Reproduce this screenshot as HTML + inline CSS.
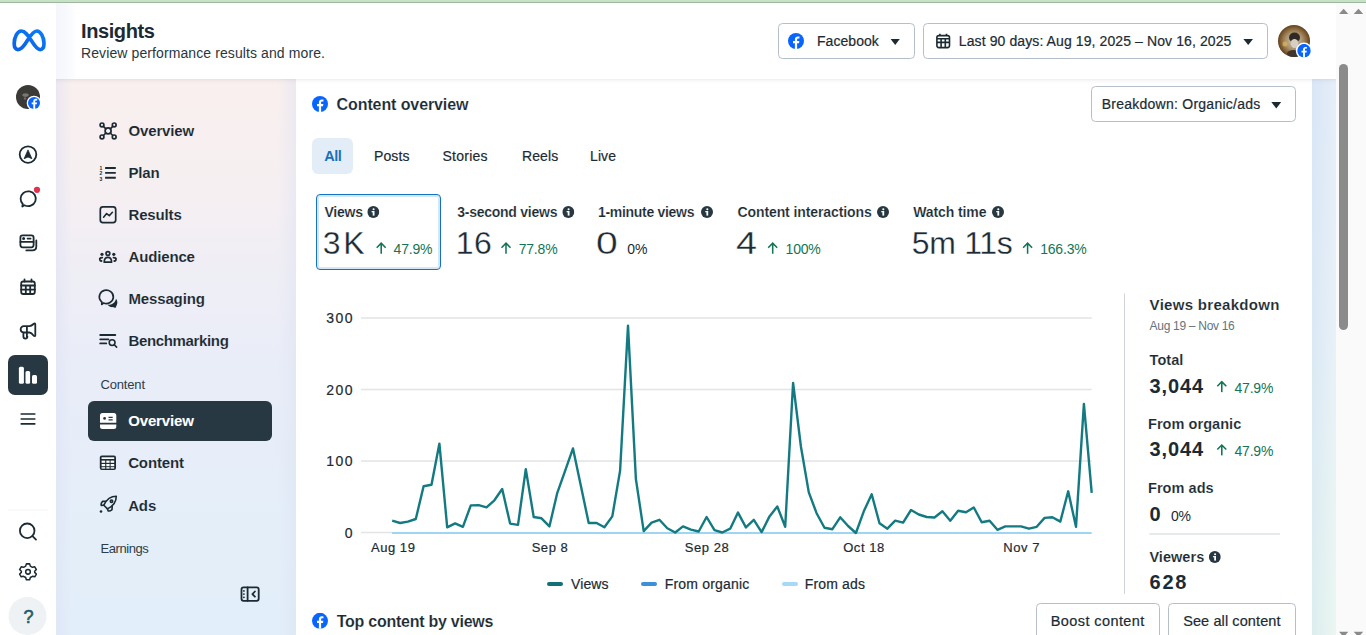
<!DOCTYPE html>
<html><head><meta charset="utf-8">
<style>
*{box-sizing:border-box;margin:0;padding:0}
html,body{width:1366px;height:635px;overflow:hidden;background:#fff;font-family:"Liberation Sans",sans-serif;color:#1c2b33}
.a{position:absolute}
.t{position:absolute;white-space:nowrap;line-height:1}
.rg{-webkit-text-stroke:0.2px #1c2b33}
.b{font-weight:700}
.sb{-webkit-text-stroke:0.12px #fff}
svg{position:absolute;overflow:visible}
#topbar{left:0;top:0;width:1366px;height:3px;background:#c6e1c6;border-bottom:1px solid #9fb79f}
#rail{left:0;top:3px;width:56px;height:632px;background:#fff}
#header{left:56px;top:3px;width:1280px;height:76px;background:linear-gradient(90deg,#f4f6fc 0px,#f8f9fd 10px,#fff 22px)}
#hshadow{left:56px;top:79px;width:1280px;height:5px;background:linear-gradient(rgba(0,0,20,0.065),rgba(0,0,20,0.025) 40%,rgba(0,0,20,0))}
#side{left:56px;top:79px;width:240px;height:556px;background:linear-gradient(90deg,rgba(222,224,244,0.5) 0px,rgba(222,224,244,0) 16px,rgba(222,224,244,0) 222px,rgba(218,224,242,0.4) 240px),linear-gradient(180deg,#f9efee 0%,#f6eff1 18%,#efeef5 35%,#e9edf8 52%,#e5eef9 75%,#e2eef9 100%)}
#main{left:296px;top:79px;width:1016px;height:556px;background:#fff}
#strip{left:1312px;top:79px;width:24px;height:556px;background:linear-gradient(90deg,rgba(210,225,245,0.35),rgba(255,255,255,0.25)),linear-gradient(180deg,#dde8f7 0%,#e0ecf5 45%,#e2f1f0 75%,#e3f4ec 100%)}
#sb{left:1336px;top:3px;width:30px;height:632px;background:#fafafa}
.btn{position:absolute;border:1px solid #b5bfc9;border-radius:4.5px;background:#fff}
.nav{font-size:15px;font-weight:700;letter-spacing:-0.15px;-webkit-text-stroke:0.12px rgba(240,238,246,0.9)}
.lbl{font-size:13px;color:#2f3d47}
.tab{font-size:14px}
.cl{font-size:14px;font-weight:700;letter-spacing:-0.2px;-webkit-text-stroke:0.15px #fff}
.val{font-size:32px;letter-spacing:0.3px;-webkit-text-stroke:0.3px #fff}
.pct{font-size:14px;color:#137555;letter-spacing:-0.2px}
.yl{font-size:14px;letter-spacing:1.5px;text-align:right;width:41.5px}
.xl{font-size:13px;letter-spacing:0.55px;width:80px;text-align:center}
.lg{font-size:14px;letter-spacing:0.1px}
.sw{position:absolute;height:4px;width:16px;border-radius:2px;top:582px}
.info{position:absolute;width:12px;height:12px;border-radius:6px;background:#283a45;color:#fff;font-size:9px;font-weight:700;text-align:center;line-height:12px}
</style></head><body>
<div id="topbar" class="a"></div>
<div id="rail" class="a"></div>
<div id="header" class="a"></div>
<div id="side" class="a"></div>
<div id="main" class="a"></div>
<div id="strip" class="a"></div>
<div id="hshadow" class="a"></div>
<div id="sb" class="a"></div>

<!-- HEADER -->
<div class="t b" style="left:81px;top:21px;font-size:20px;letter-spacing:-0.4px">Insights</div>
<div class="t" style="left:81px;top:46px;font-size:14px;letter-spacing:0.1px;color:#283842">Review performance results and more.</div>

<!-- RAIL -->
<svg style="left:0;top:0" width="56" height="635" viewBox="0 0 56 635">
 <defs><linearGradient id="mg" x1="0" y1="1" x2="1" y2="0"><stop offset="0" stop-color="#0a62e6"/><stop offset="1" stop-color="#0a7cf7"/></linearGradient></defs><path d="M21.3 31 C25 31 27.8 35 31.3 40.5 C35 46.5 37.5 49.6 40.2 49.6 C42.6 49.6 44 47.3 44 43.6 C44 37 40.6 31 36.8 31 C33.6 31 30.8 35 27.4 40.5 C23.9 46.3 21.3 49.6 18 49.6 C15.6 49.6 14.2 47.4 14.2 43.6 C14.2 37 17.4 31 21.3 31 Z" fill="none" stroke="url(#mg)" stroke-width="3.7" stroke-linejoin="round"/>
 <circle cx="28" cy="97" r="12" fill="#3b3a36"/>
 <ellipse cx="25.5" cy="95" rx="3.2" ry="1.8" fill="#8f8c82" opacity="0.75"/><circle cx="25" cy="98.5" r="1.2" fill="#8f8c82" opacity="0.6"/>
 <circle cx="34" cy="103" r="7.3" fill="#fff"/>
 <circle cx="34" cy="103" r="6" fill="#0866ff"/>
 <path d="M35.2 109 V104.3 H36.8 L37.1 102.5 H35.2 V101.4 C35.2 100.8 35.5 100.4 36.3 100.4 H37.2 V98.8 C36.8 98.7 36.3 98.7 35.8 98.7 C34.3 98.7 33.3 99.6 33.3 101.2 V102.5 H31.7 V104.3 H33.3 V109 Z" fill="#fff"/>
 <g fill="none" stroke="#1c2b33" stroke-width="1.8" stroke-linecap="round" stroke-linejoin="round">
  <circle cx="28" cy="154.6" r="8.3"/>
  <path d="M20.6 198.6 A7.6 7.4 0 1 1 24.5 205.2 L22.3 206.5 L22.8 204 A7.6 7.4 0 0 1 20.6 198.6 Z"/>
  <rect x="20.4" y="235.3" width="13.2" height="12" rx="2.2"/>
  <path d="M20.4 241.9 H33.6 M27.6 238.6 H30.6"/>
  <path d="M36.3 240.5 V246.5 Q36.3 250.4 32.4 250.4 H26.3"/>
  <rect x="21.2" y="281.5" width="13.6" height="12.5" rx="2"/>
  <path d="M24.5 279.5 V281.5 M31.5 279.5 V281.5 M21.2 285.5 H34.8 M21.2 289.7 H34.8 M25.8 285.5 V294 M30.2 285.5 V294"/>
  <path d="M26.9 326.2 H23.8 A3.15 3.15 0 0 0 23.8 332.5 H26.9 Z M26.9 326.2 H29.5 Q31.5 326 33.5 324 Q35.3 322.6 35.3 324.5 V335.2 Q35.3 337 33.5 335.6 Q31.5 332.7 29.5 332.5 H26.9 M26.9 326.2 V336.8 M23.4 332.5 V336.6 A2 2 0 0 0 27.4 336.6"/>
  <circle cx="27.2" cy="530.8" r="7.3"/>
  <path d="M32.5 536.1 L36 539.6"/>
 </g>
 
 <path d="M28 149.9 L24.1 158.7 L28 157 L31.9 158.7 Z" fill="#1c2b33" stroke="#1c2b33" stroke-width="0.8" stroke-linejoin="round"/>
 <circle cx="23.6" cy="238.6" r="1.5" fill="#1c2b33"/>
 <circle cx="37" cy="189.8" r="3.1" fill="#e0324b"/>
 <rect x="8" y="355" width="40" height="40" rx="7" fill="#283842"/>
 <rect x="18.9" y="366.7" width="5" height="17" rx="1.5" fill="#fff"/>
 <rect x="25.5" y="371" width="4.6" height="12.7" rx="1.5" fill="#fff"/>
 <rect x="32" y="375" width="5" height="8.7" rx="1.5" fill="#fff"/>
 <path d="M20.6 414 H35.4 M20.6 419 H35.4 M20.6 423.8 H35.4" stroke="#1c2b33" stroke-width="1.7"/>
 <path d="M8 510 H48" stroke="#f4f4f4" stroke-width="1.2"/>
 <g transform="translate(28 571.8) scale(0.9)" fill="none" stroke="#1c2b33" stroke-width="1.7" stroke-linejoin="round">
  <path d="M-1.8 -8.8 H1.8 L2.6 -6.3 L4.9 -5 L7.5 -5.6 L9.3 -2.5 L7.4 -0.6 V0.6 L9.3 2.5 L7.5 5.6 L4.9 5 L2.6 6.3 L1.8 8.8 H-1.8 L-2.6 6.3 L-4.9 5 L-7.5 5.6 L-9.3 2.5 L-7.4 0.6 V-0.6 L-9.3 -2.5 L-7.5 -5.6 L-4.9 -5 L-2.6 -6.3 Z"/>
  <circle cx="0" cy="0" r="2.6"/>
 </g>
 <circle cx="27.5" cy="616" r="19" fill="#eef2f5"/>
</svg>
<div class="t" style="left:21.5px;top:607.5px;font-size:18px;color:#1b5f6e;width:14px;text-align:center;-webkit-text-stroke:0.6px #1b5f6e">?</div>
<!-- SIDEBAR -->
<div class="a" style="left:88px;top:401px;width:184px;height:40px;border-radius:6px;background:#283842"></div>
<svg style="left:0;top:0" width="300" height="635" viewBox="0 0 300 635">
 <g fill="none" stroke="#1c2b33" stroke-width="1.7" stroke-linecap="round" stroke-linejoin="round">
  <circle cx="102" cy="124.9" r="1.9"/><circle cx="114.2" cy="124.9" r="1.9"/><circle cx="102" cy="136.9" r="1.9"/><circle cx="114.2" cy="136.9" r="1.9"/>
  <circle cx="108.1" cy="130.9" r="3"/>
  <path d="M103.4 126.3 L105.9 128.8 M112.8 126.3 L110.3 128.8 M103.4 135.5 L105.9 133 M112.8 135.5 L110.3 133"/>
  <path d="M105.1 168 H115.8 M105.1 172.9 H115.8 M105.1 177.7 H115.8" stroke-width="1.9" stroke-linecap="butt"/>
  <rect x="100.3" y="206.9" width="15.4" height="15.7" rx="2.6"/>
  <path d="M103.6 217.2 L106.6 213.6 L109.3 215.7 L112.4 212.3" stroke-width="1.6"/>
  <circle cx="107.9" cy="253.5" r="1.9"/>
  <path d="M104.2 262.2 Q104.2 257.4 107.9 257.4 Q111.6 257.4 111.6 262.2 Z"/>
  <path d="M101.5 261 Q99.6 261 99.8 258.6 Q100.5 257.6 102.3 257.6 M114.3 261 Q116.2 261 116 258.6 Q115.3 257.6 113.5 257.6" stroke-width="1.8"/>
  <path d="M100.7 300.8 A7 6.7 0 1 1 103.6 303 L101.8 304.4 L101.8 301.9 A7 6.7 0 0 1 100.7 300.8 Z"/>
  <path d="M100.2 335 H115.3 M100.2 339.3 H108.5 M100.2 343.4 H106.3" stroke-width="1.8"/>
  <circle cx="112.1" cy="342.6" r="2.9" stroke-width="1.6"/>
  <path d="M114.3 344.8 L116.6 347.1" stroke-width="1.6"/>
  <rect x="241.5" y="587.4" width="17.2" height="13.4" rx="2" stroke-width="1.8"/>
  <path d="M247.6 587.4 V600.8 M254.9 591.5 L252.4 594.1 L254.9 596.7" stroke-width="1.8"/>
 </g>
 <g fill="#1c2b33">
  <text x="99.4" y="169.9" font-size="5" font-family="Liberation Sans" font-weight="700">1</text>
  <text x="99.4" y="175.2" font-size="5" font-family="Liberation Sans" font-weight="700">2</text>
  <text x="99.4" y="180.5" font-size="5" font-family="Liberation Sans" font-weight="700">3</text>
  <circle cx="102" cy="254.3" r="1.6"/><circle cx="113.8" cy="254.3" r="1.6"/>
  <path d="M107.6 304.8 C111.8 305 115 303 116 298.8 C117.6 300.6 117.8 303.5 116.6 305.6 L115.4 307.9 L112.9 307.1 C110.9 307.4 109 306.6 107.6 304.8 Z"/>
  <circle cx="243.9" cy="590.9" r="0.9"/><circle cx="243.9" cy="594.1" r="0.9"/><circle cx="243.9" cy="597.3" r="0.9"/>
  <path d="M99.8 457.4 Q99.8 455.4 101.8 455.4 H114 Q116 455.4 116 457.4 V468.1 Q116 470.1 114 470.1 H101.8 Q99.8 470.1 99.8 468.1 Z"/>
 </g>
 <g fill="#fff">
  <rect x="101.6" y="457.3" width="12.6" height="1.7"/>
  <rect x="101.6" y="460.6" width="3.6" height="2.2"/><rect x="106.3" y="460.6" width="3.3" height="2.2"/><rect x="110.6" y="460.6" width="3.6" height="2.2"/>
  <rect x="101.6" y="464" width="3.6" height="2.2"/><rect x="106.3" y="464" width="3.3" height="2.2"/><rect x="110.6" y="464" width="3.6" height="2.2"/>
  <rect x="101.6" y="467.2" width="3.6" height="1.4"/><rect x="106.3" y="467.2" width="3.3" height="1.4"/><rect x="110.6" y="467.2" width="3.6" height="1.4"/>
  <path d="M100 415.6 Q100 413.1 102.5 413.1 H113.8 Q116.3 413.1 116.3 415.6 V422.8 H100 Z M100 424.5 H116.3 V426.4 Q116.3 428.9 113.8 428.9 H102.5 Q100 428.9 100 426.4 Z"/>
 </g>
 <circle cx="104.6" cy="418.4" r="1.4" fill="#283842"/>
 <path d="M108.5 417.4 H112.7 M108.5 419.8 H112.7" stroke="#283842" stroke-width="1.2"/>
 <g fill="none" stroke="#1c2b33" stroke-width="1.6" stroke-linecap="round" stroke-linejoin="round">
  <path d="M116.3 496.3 C111.5 496.3 106.5 499.5 103.8 505.2 L107.5 508.9 C113.2 506.2 116.3 501.2 116.3 496.3 Z"/>
  <path d="M105.8 501.2 L102.6 501.4 Q100.6 503.4 101.3 505.4 L103.8 505.2 M112.2 506.4 L112 509.6 Q110 511.4 108.2 510.9 L107.5 508.9"/>
  <circle cx="111.5" cy="501.2" r="1.2"/>
 </g>
 <circle cx="101" cy="511.5" r="1.3" fill="#1c2b33"/>
</svg>
<div class="t nav" style="left:128.5px;top:123.4px">Overview</div>
<div class="t nav" style="left:128.5px;top:165.4px">Plan</div>
<div class="t nav" style="left:128.5px;top:207.3px">Results</div>
<div class="t nav" style="left:128.5px;top:249.3px">Audience</div>
<div class="t nav" style="left:128.5px;top:291.3px">Messaging</div>
<div class="t nav" style="left:128.5px;top:332.8px;letter-spacing:-0.35px">Benchmarking</div>
<div class="t lbl" style="left:100.4px;top:378px;letter-spacing:-0.15px">Content</div>
<div class="t nav" style="left:128.2px;top:413.4px;color:#fff">Overview</div>
<div class="t nav" style="left:128.2px;top:455.1px">Content</div>
<div class="t nav" style="left:128.2px;top:497.5px">Ads</div>
<div class="t lbl" style="left:100.6px;top:542px;letter-spacing:-0.45px">Earnings</div>

<!-- HEADER CONTROLS -->
<div class="btn" style="left:778px;top:23px;width:137px;height:36px"></div>
<div class="btn" style="left:923px;top:23px;width:345px;height:36px"></div>
<div class="t rg" style="left:817px;top:34.2px;font-size:14px;letter-spacing:0.05px">Facebook</div>
<div class="t rg" style="left:958.8px;top:34.2px;font-size:14px;letter-spacing:0.1px">Last 90 days: Aug 19, 2025 – Nov 16, 2025</div>
<svg style="left:0;top:0" width="1366" height="80" viewBox="0 0 1366 80">
 <defs>
  <symbol id="fb" viewBox="0 0 16 16"><circle cx="8" cy="8" r="8" fill="#0866ff"/><path d="M9.1 16 V10.2 H11 L11.35 8 H9.1 V6.7 C9.1 6 9.45 5.5 10.4 5.5 H11.45 V3.6 C11 3.55 10.4 3.5 9.85 3.5 C8.05 3.5 6.9 4.6 6.9 6.5 V8 H5 V10.2 H6.9 V16 Z" fill="#fff"/></symbol>
 </defs>
 <use href="#fb" x="788" y="33" width="16" height="16"/>
 <path d="M890.6 39 H899.8 L895.2 44.9 Z" fill="#1c2b33"/>
 <path d="M1243.4 39 H1253 L1248.2 44.9 Z" fill="#1c2b33"/>
 <g fill="none" stroke="#1c2b33" stroke-width="1.6">
  <rect x="936.9" y="35.6" width="12.6" height="12" rx="2"/>
  <path d="M939.9 33.8 V35.6 M946.5 33.8 V35.6 M936.9 38.8 H949.5 M936.9 42.4 H949.5 M941.1 38.8 V47.6 M945.3 38.8 V47.6"/>
 </g>
 <defs><radialGradient id="av" cx="50%" cy="50%" r="50%"><stop offset="0" stop-color="#cfc8b8"/><stop offset="0.55" stop-color="#a88f68"/><stop offset="0.85" stop-color="#7f5c30"/><stop offset="1" stop-color="#5e4222"/></radialGradient></defs>
 <circle cx="1294" cy="41" r="16" fill="url(#av)"/>
 <ellipse cx="1294.5" cy="37.5" rx="5.5" ry="5" fill="#2f2a25"/>
 <ellipse cx="1294.5" cy="43.5" rx="3.8" ry="4.5" fill="#d6cfc2"/>
 <ellipse cx="1294" cy="53.5" rx="7" ry="3.5" fill="#3e352d"/>
 <circle cx="1285" cy="44" r="2.5" fill="#d7b060" opacity="0.8"/>
 <circle cx="1304" cy="50.7" r="8.2" fill="#fff"/>
 <use href="#fb" x="1297.2" y="43.9" width="13.6" height="13.6"/>
 <path d="M1339 13.9 L1343.65 8.8 L1348.3 13.9 Z M1353.7 13.9 L1358.45 8.8 L1363.2 13.9 Z" fill="#8a8a8a"/>
</svg>
<div class="a" style="left:1339px;top:64px;width:9px;height:266px;border-radius:4.5px;background:#8b8b8b"></div>
<svg style="left:1336px;top:625px" width="30" height="10"><path d="M3 6.8 L12.3 6.8 L7.65 12 Z M17.7 6.8 L27.2 6.8 L22.45 12 Z" fill="#8a8a8a"/></svg>

<!-- CONTENT OVERVIEW -->
<svg style="left:312px;top:96px" width="16" height="16" viewBox="0 0 16 16"><use href="#fb"/></svg>
<div class="t b sb" style="left:336.6px;top:96.5px;font-size:16px;letter-spacing:-0.1px">Content overview</div>
<div class="btn" style="left:1091px;top:86px;width:205px;height:36px"></div>
<div class="t rg" style="left:1101.7px;top:97.2px;font-size:14px;letter-spacing:0.25px">Breakdown: Organic/ads</div>
<svg style="left:1271px;top:101px" width="12" height="8"><path d="M0.3 1 H10.2 L5.25 7.5 Z" fill="#1c2b33"/></svg>

<div class="a" style="left:312px;top:138px;width:41px;height:35.5px;border-radius:6px;background:#e3edf7"></div>
<div class="t b tab" style="left:324.3px;top:149.2px;color:#1a70bd;font-size:14.5px;letter-spacing:-0.5px">All</div>
<div class="t tab rg" style="left:374px;top:149.2px;letter-spacing:0.1px">Posts</div>
<div class="t tab rg" style="left:442.5px;top:149.2px;letter-spacing:0.25px">Stories</div>
<div class="t tab rg" style="left:522px;top:149.2px;letter-spacing:0.1px">Reels</div>
<div class="t tab rg" style="left:590px;top:149.2px;letter-spacing:0.1px">Live</div>

<!-- METRIC CARDS -->
<div class="a" style="left:316px;top:194px;width:125px;height:75.5px;border:1px solid #1571c4;border-radius:4px;box-shadow:inset 0 0 0 2px #d5e6f5"></div>
<div class="t cl" style="left:324.4px;top:205px">Views</div>
<div class="t cl" style="left:457.2px;top:205px;letter-spacing:-0.25px">3-second views</div>
<div class="t cl" style="left:598px;top:205px;letter-spacing:-0.3px">1-minute views</div>
<div class="t cl" style="left:737.5px;top:205px;letter-spacing:-0.1px">Content interactions</div>
<div class="t cl" style="left:913.2px;top:205px;letter-spacing:-0.1px">Watch time</div>
<div class="t val" style="left:322.8px;top:226.9px;letter-spacing:2.6px">3K</div>
<div class="t val" style="left:455.8px;top:226.9px">16</div>
<div class="t val" style="left:596.3px;top:226.9px;transform:scaleX(1.22);transform-origin:0 0">0</div>
<div class="t val" style="left:735.8px;top:226.9px;transform:scaleX(1.18);transform-origin:0 0">4</div>
<div class="t val" style="left:911.8px;top:226.9px;letter-spacing:-0.3px">5m 11s</div>
<div class="t pct" style="left:393.6px;top:242.2px">47.9%</div>
<div class="t pct" style="left:518.7px;top:242.2px">77.8%</div>
<div class="t pct" style="left:627.3px;top:242.2px;color:#1c2b33">0%</div>
<div class="t pct" style="left:785.6px;top:242.2px">100%</div>
<div class="t pct" style="left:1040.2px;top:242.2px">166.3%</div>
<svg style="left:0;top:0" width="1366" height="635" viewBox="0 0 1366 635">
 <defs>
  <symbol id="up" viewBox="0 0 12 12"><path d="M6 11.8 V1.4 M1.5 5.7 L6 1.2 L10.5 5.7" fill="none" stroke="#137555" stroke-width="1.55" stroke-linejoin="miter"/></symbol>
  <symbol id="inf" viewBox="0 0 12 12"><circle cx="6" cy="6" r="6" fill="#283842"/><rect x="5.4" y="5" width="1.8" height="4.6" fill="#fff"/><rect x="4.3" y="5" width="1.6" height="1.3" fill="#fff"/><circle cx="6.3" cy="3.2" r="1.05" fill="#fff"/></symbol>
 </defs>
 <use href="#inf" x="367.3" y="206" width="12" height="12"/>
 <use href="#inf" x="562.3" y="206" width="12" height="12"/>
 <use href="#inf" x="701" y="206" width="12" height="12"/>
 <use href="#inf" x="877" y="206" width="12" height="12"/>
 <use href="#inf" x="992" y="206" width="12" height="12"/>
 <use href="#up" x="375.2" y="242" width="12" height="12"/>
 <use href="#up" x="500" y="242" width="12" height="12"/>
 <use href="#up" x="766.7" y="242" width="12" height="12"/>
 <use href="#up" x="1021.6" y="242" width="12" height="12"/>
</svg>

<!-- CHART -->
<svg style="left:0;top:0" width="1366" height="635" viewBox="0 0 1366 635">
 <path d="M361 318 H1091.7 M361 389.5 H1091.7 M361 461 H1091.7 M361 532.5 H392" stroke="#e2e4e6" stroke-width="1.5"/>
 <path d="M392 533 H1091.7" stroke="#9fd4f3" stroke-width="2"/>
 <polyline points="392.2,520.6 400.1,523.0 407.9,521.6 415.8,519.0 423.6,486.2 431.5,484.8 439.4,443.6 447.2,527.4 455.1,523.4 462.9,526.8 470.8,505.4 478.7,505.1 486.5,507.3 494.4,500.3 502.2,489.0 510.1,523.6 518.0,524.9 525.8,469.1 533.7,517.0 541.5,518.3 549.4,526.4 557.3,492.8 565.1,470.8 573.0,448.4 580.8,485.6 588.7,523.0 596.6,523.0 604.4,527.2 612.3,516.4 620.1,470.6 628.0,325.6 635.9,479.1 643.7,531.1 651.6,522.6 659.4,519.8 667.3,528.3 675.2,532.5 683.0,526.4 690.9,529.6 698.7,531.5 706.6,517.0 714.5,530.2 722.3,532.5 730.2,528.7 738.0,512.6 745.9,527.4 753.8,519.8 761.6,532.1 769.5,516.4 777.3,506.5 785.2,526.8 793.1,382.9 800.9,446.5 808.8,492.4 816.6,513.2 824.5,527.7 832.4,529.2 840.2,517.3 848.1,526.0 855.9,533.0 863.8,511.3 871.7,494.3 879.5,523.2 887.4,528.7 895.2,520.7 903.1,522.6 911.0,510.0 918.8,514.5 926.7,517.0 934.5,517.5 942.4,511.3 950.3,520.7 958.1,510.7 966.0,512.2 973.8,507.5 981.7,522.2 989.6,520.7 997.4,529.8 1005.3,526.4 1013.1,526.4 1021.0,526.4 1028.9,528.7 1036.7,526.8 1044.6,517.9 1052.4,517.3 1060.3,521.6 1068.2,491.3 1076.0,526.8 1083.9,403.9 1091.7,492.8" fill="none" stroke="#147a82" stroke-width="2.4" stroke-linejoin="round"/>
 <path d="M1124.5 293.5 V594" stroke="#ced4da" stroke-width="1"/>
 <path d="M1149.4 534 H1280" stroke="#ced4da" stroke-width="1"/>
 <use href="#up" x="1215.8" y="380.5" width="12" height="12"/>
 <use href="#up" x="1215.8" y="443.8" width="12" height="12"/>
 <use href="#inf" x="1208.8" y="551" width="12" height="12"/>
 <use href="#fb" x="312" y="612.8" width="16" height="16"/>
</svg>
<div class="t yl rg" style="left:312.5px;top:311.3px">300</div>
<div class="t yl rg" style="left:312.5px;top:382.8px">200</div>
<div class="t yl rg" style="left:312.5px;top:454.3px">100</div>
<div class="t yl rg" style="left:312.5px;top:525.8px">0</div>
<div class="t xl rg" style="left:353.2px;top:540.5px">Aug 19</div>
<div class="t xl rg" style="left:510px;top:540.5px">Sep 8</div>
<div class="t xl rg" style="left:667px;top:540.5px">Sep 28</div>
<div class="t xl rg" style="left:824px;top:540.5px">Oct 18</div>
<div class="t xl rg" style="left:981.6px;top:540.5px">Nov 7</div>
<div class="sw" style="left:547px;background:#117177"></div>
<div class="sw" style="left:641px;background:#3d8fd6"></div>
<div class="sw" style="left:782px;background:#a6d8f7"></div>
<div class="t lg rg" style="left:571px;top:577.3px">Views</div>
<div class="t lg rg" style="left:664.7px;top:577.3px;letter-spacing:0.2px">From organic</div>
<div class="t lg rg" style="left:804.8px;top:577.3px;letter-spacing:0.15px">From ads</div>

<!-- BREAKDOWN -->
<div class="t b sb" style="left:1149.6px;top:296.9px;font-size:15px;letter-spacing:0.3px">Views breakdown</div>
<div class="t" style="left:1149.6px;top:319.9px;font-size:12px;letter-spacing:-0.3px;color:#65737e">Aug 19 – Nov 16</div>
<div class="t b sb" style="left:1149.6px;top:352.5px;font-size:14.5px;letter-spacing:0.05px">Total</div>
<div class="t b" style="left:1149.6px;top:375.5px;font-size:20px;letter-spacing:0.9px">3,044</div>
<div class="t pct" style="left:1234.5px;top:380.6px">47.9%</div>
<div class="t b sb" style="left:1148px;top:416.7px;font-size:14.5px;letter-spacing:0.05px">From organic</div>
<div class="t b" style="left:1149.6px;top:438.8px;font-size:20px;letter-spacing:0.9px">3,044</div>
<div class="t pct" style="left:1234.5px;top:443.9px">47.9%</div>
<div class="t b sb" style="left:1148px;top:480.8px;font-size:14.5px;letter-spacing:0.05px">From ads</div>
<div class="t b" style="left:1149.6px;top:504.2px;font-size:20px;letter-spacing:0.9px">0</div>
<div class="t pct" style="left:1171px;top:509.3px;color:#1c2b33">0%</div>
<div class="t b sb" style="left:1149.4px;top:549.9px;font-size:14.5px;letter-spacing:0.05px">Viewers</div>
<div class="t b" style="left:1149.6px;top:572.4px;font-size:20px;letter-spacing:1.7px">628</div>

<!-- BOTTOM -->
<div class="t b sb" style="left:336.7px;top:613.9px;font-size:16px;letter-spacing:-0.25px">Top content by views</div>
<div class="btn" style="left:1036px;top:603px;width:124px;height:40px"></div>
<div class="btn" style="left:1168px;top:603px;width:128px;height:40px"></div>
<div class="t rg" style="left:1050.8px;top:613.9px;font-size:14.5px;letter-spacing:0.4px">Boost content</div>
<div class="t rg" style="left:1183.2px;top:613.9px;font-size:14.5px;letter-spacing:0.1px">See all content</div>

</body></html>
